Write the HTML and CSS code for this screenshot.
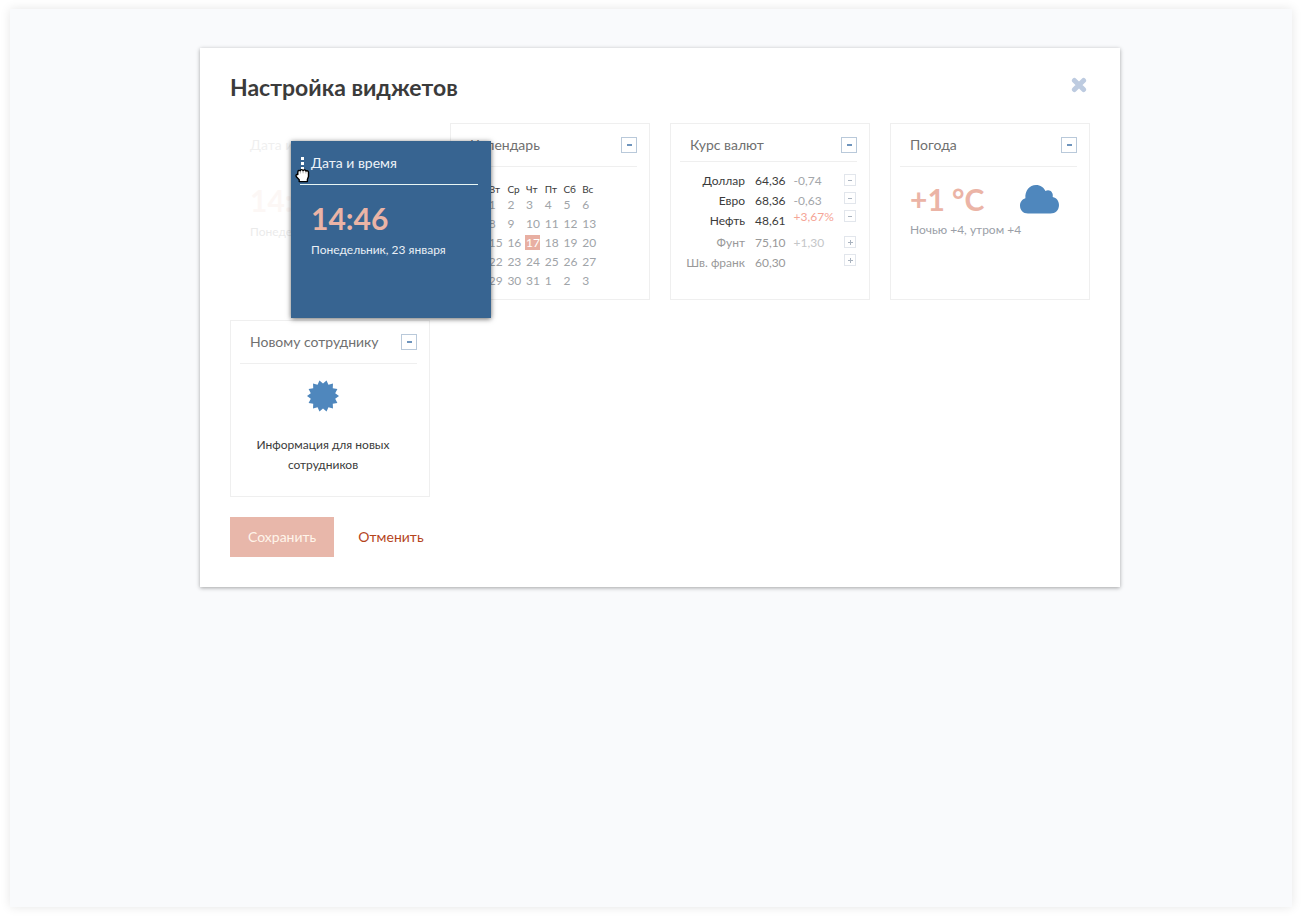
FILE: index.html
```html
<!DOCTYPE html>
<html lang="ru">
<head>
<meta charset="utf-8">
<title>Настройка виджетов</title>
<link rel="stylesheet" href="styles.css">
</head>
<body>
<main class="page">
  <section class="dialog" role="dialog" aria-labelledby="dialog-title">
    <header class="dialog-head">
      <h1 class="dialog-title" id="dialog-title">Настройка виджетов</h1>
      <button class="close" type="button" aria-label="Закрыть">
        <svg width="16" height="16" viewBox="0 0 16 16"><path d="M3.4 3.4l9.2 9.2M12.6 3.4l-9.2 9.2" stroke="currentColor" stroke-width="5" stroke-linecap="round"/></svg>
      </button>
    </header>

    <div class="widgets">
      <div class="slot">
        <article class="card card-ghost" aria-hidden="true">
          <div class="card-head"><h2 class="card-title">Дата и время</h2></div>
          <div class="big">14:46</div>
          <p class="note">Понедельник, 23 января</p>
        </article>
        <article class="card card-drag">
          <svg class="grip" width="4" height="13" viewBox="0 0 4 13"><path d="M0 0h3v3H0zM0 5h3v3H0zM0 10h3v3H0z" fill="#fff"/></svg>
          <svg class="hand" width="16" height="15" viewBox="0 0 16 15"><path d="M4.2 13.6V11.8L1.6 9C.4 7.4 1.2 6 2.8 6.600V4c0-1.700 1.800-2 2.400-1 .3-1.700 2.500-1.800 2.900-.3.600-1.200 2.400-1 2.800.4 1.200-.8 2.600-.1 2.600 1.500v4L12.400 11.500v2.100z" fill="#fff" stroke="#000" stroke-width="1.400" stroke-linejoin="round"/><path d="M5.300 4v1.500M8.100 3.700v1.600M10.900 4v1.500" stroke="#777" stroke-width=".6"/></svg>
          <div class="card-head"><h2 class="card-title">Дата и время</h2></div>
          <div class="big">14:46</div>
          <p class="note">Понедельник, 23 января</p>
        </article>
      </div>

      <article class="card">
        <div class="card-head"><h2 class="card-title">Календарь</h2><button class="toggle" type="button" aria-label="Убрать"></button></div>
        <table class="calendar">
          <thead><tr><th>Пн</th><th>Вт</th><th>Ср</th><th>Чт</th><th>Пт</th><th>Сб</th><th>Вс</th></tr></thead>
          <tbody>
            <tr><td>31</td><td>1</td><td>2</td><td>3</td><td>4</td><td>5</td><td>6</td></tr>
            <tr><td>7</td><td>8</td><td>9</td><td>10</td><td>11</td><td>12</td><td>13</td></tr>
            <tr><td>14</td><td>15</td><td>16</td><td><span class="today">17</span></td><td>18</td><td>19</td><td>20</td></tr>
            <tr><td>21</td><td>22</td><td>23</td><td>24</td><td>25</td><td>26</td><td>27</td></tr>
            <tr><td>28</td><td>29</td><td>30</td><td>31</td><td>1</td><td>2</td><td>3</td></tr>
          </tbody>
        </table>
      </article>

      <article class="card card-compact">
        <div class="card-head"><h2 class="card-title">Курс валют</h2><button class="toggle" type="button" aria-label="Убрать"></button></div>
        <div class="rates">
          <table class="rates-table">
            <tbody>
              <tr><th>Доллар</th><td>64,36</td><td class="delta">-0,74</td></tr>
              <tr><th>Евро</th><td>68,36</td><td class="delta">-0,63</td></tr>
              <tr><th>Нефть</th><td>48,61</td><td class="delta delta-up">+3,67%</td></tr>
            </tbody>
            <tbody class="off">
              <tr><th>Фунт</th><td>75,10</td><td class="delta">+1,30</td></tr>
              <tr><th>Шв. франк</th><td>60,30</td><td class="delta"></td></tr>
            </tbody>
          </table>
          <div class="rate-buttons">
            <button class="mini" type="button" aria-label="Убрать доллар"></button>
            <button class="mini" type="button" aria-label="Убрать евро"></button>
            <button class="mini" type="button" aria-label="Убрать нефть"></button>
            <button class="mini mini-plus mini-first" type="button" aria-label="Добавить фунт"></button>
            <button class="mini mini-plus" type="button" aria-label="Добавить шв. франк"></button>
          </div>
        </div>
      </article>

      <article class="card">
        <div class="card-head"><h2 class="card-title">Погода</h2><button class="toggle" type="button" aria-label="Убрать"></button></div>
        <div class="weather">
          <div class="big">+1 °C</div>
          <svg width="39" height="29" viewBox="0 0 39 29"><path d="M8 28.500C3 28.500 0 25 0 20.500c0-3.600 2.200-6.300 5.400-7.300C4.800 5.500 9.500 0 16 0c4.500 0 7.800 2.400 9.400 6.100 4-2.400 8.300 1 7.300 5.900 3.900.9 6.300 4 6.300 8 0 5-3.500 8.500-8.500 8.500z" fill="#4f87bd"/></svg>
        </div>
        <p class="note note-weather">Ночью +4, утром +4</p>
      </article>

      <article class="card">
        <div class="card-head"><h2 class="card-title">Новому сотруднику</h2><button class="toggle" type="button" aria-label="Убрать"></button></div>
        <div class="newcomer">
          <svg width="32" height="32" viewBox="-16 -16 32 32"><path d="M3.56 -15.6L5.42 -11.26L9.98 -12.51L9.77 -7.79L14.42 -6.94L12.19 -2.78L16 0L12.19 2.78L14.42 6.94L9.77 7.79L9.98 12.51L5.42 11.26L3.56 15.6L0 12.5L-3.56 15.6L-5.42 11.26L-9.98 12.51L-9.77 7.79L-14.42 6.94L-12.19 2.78L-16 0L-12.19 -2.78L-14.42 -6.94L-9.77 -7.79L-9.98 -12.51L-5.42 -11.26L-3.56 -15.6L0 -12.5Z" fill="#4f87bd"/></svg>
          <p class="newcomer-text">Информация для новых сотрудников</p>
        </div>
      </article>
    </div>

    <footer class="actions">
      <button class="save" type="button">Сохранить</button>
      <a class="cancel" href="#">Отменить</a>
    </footer>
  </section>
</main>
</body>
</html>
```
FILE: styles.css
```css
* {
  box-sizing: border-box;
}

body {
  margin: 0;
  padding: 9px 10px 12px;
  min-height: 100vh;
  display: flex;
  background: #fff;
  color: #3b3b3b;
  font-family: Lato, "Open Sans", sans-serif;
}

h1,
h2,
p {
  margin: 0;
}

button {
  font-family: inherit;
  cursor: pointer;
}

.page {
  flex: 1;
  padding: 39px 20px 39px 190px;
  background: #f9fafc;
  box-shadow: 0 0 10px rgba(0, 0, 0, 0.1);
}

.dialog {
  max-width: 920px;
  padding: 23px 30px 30px;
  background: #fff;
  box-shadow: 0 1px 4px rgba(0, 0, 0, 0.35);
}

.dialog-head {
  display: flex;
  justify-content: space-between;
  align-items: flex-start;
  margin-bottom: 20px;
}

.dialog-title {
  font-size: 23px;
  line-height: 32px;
  font-weight: 700;
}

.close {
  display: flex;
  margin: 6px 3px 0 0;
  padding: 0;
  border: 0;
  background: none;
  color: #bdcbe0;
}

.widgets {
  display: grid;
  grid-template-columns: repeat(auto-fill, 200px);
  gap: 20px;
}

.slot {
  position: relative;
}

.card {
  height: 177px;
  border: 1px solid #efefef;
  background: #fff;
}

.card-head {
  display: flex;
  justify-content: space-between;
  align-items: center;
  height: 43px;
  margin: 0 12px 0 9px;
  padding-left: 10px;
  border-bottom: 1px solid #efefef;
}

.card-compact .card-head {
  height: 38px;
}

.card-title {
  color: #707070;
  font-size: 14px;
  line-height: 20px;
  font-weight: 400;
}

.card-compact .card-title,
.card-compact .toggle {
  margin-top: 4px;
}

.toggle {
  display: flex;
  align-items: center;
  justify-content: center;
  width: 16px;
  height: 16px;
  padding: 0;
  border: 1px solid #b9c9da;
  background: #fff;
}

.toggle::before {
  content: "";
  width: 5px;
  height: 2px;
  background: #6f95bd;
}

.big {
  padding: 14px 0 0 19px;
  color: #ebb4a6;
  font-size: 30px;
  line-height: 38px;
  font-weight: 700;
}

.note {
  padding: 3px 0 0 19px;
  font-size: 12px;
  line-height: 20px;
}

.card-ghost {
  border-color: transparent;
  opacity: 0.1;
}

.card-ghost .card-head {
  border-color: transparent;
}

.card-drag {
  position: absolute;
  top: 18px;
  left: 61px;
  width: 200px;
  border-color: #37648f;
  background: #376491;
  color: #e9eff5;
  box-shadow: 0 1px 5px rgba(0, 0, 0, 0.6);
}

.card-drag .card-head {
  margin-left: 8px;
  padding-left: 11px;
  border-color: #e8f6f4;
}

.card-drag .card-title {
  color: #eef3f8;
}

.grip {
  position: absolute;
  top: 15px;
  left: 9px;
}

.hand {
  position: absolute;
  top: 26px;
  left: 3px;
}

.calendar {
  width: 131px;
  margin: 17px 0 0 19px;
  border-collapse: collapse;
  table-layout: fixed;
}

.calendar th,
.calendar td {
  padding: 0;
  text-align: left;
  font-weight: 400;
}

.calendar th {
  font-size: 10px;
  line-height: 11px;
}

.calendar td {
  color: #a0a4a8;
  font-size: 12px;
  line-height: 19px;
}

.today {
  display: block;
  width: 15px;
  margin-left: -1px;
  padding-left: 1px;
  background: #e8afa2;
  color: #fff;
  line-height: 15px;
}

.rates {
  display: flex;
  justify-content: space-between;
  padding: 9px 13px 0 9px;
}

.rates-table {
  border-collapse: collapse;
  font-size: 12px;
  line-height: 20px;
}

.rates-table th,
.rates-table td {
  padding: 0;
  font-weight: 400;
  white-space: nowrap;
}

.rates-table th {
  width: 65px;
  text-align: right;
}

.rates-table td {
  padding-left: 10px;
}

.rates-table .delta {
  padding-left: 8px;
  color: #a3a6aa;
}

.rates-table .delta-up {
  color: #f5a596;
  line-height: 12px;
  vertical-align: top;
}

.off {
  color: #999;
}

.rates-table .off .delta {
  color: #c4c6c8;
}

.off tr:first-child > * {
  padding-top: 2px;
}

.rate-buttons {
  display: flex;
  flex-direction: column;
  gap: 6px;
  padding-top: 3px;
}

.mini {
  position: relative;
  width: 12px;
  height: 12px;
  padding: 0;
  border: 1px solid #e2e6ec;
  background: #fff;
}

.mini::before,
.mini-plus::after {
  content: "";
  position: absolute;
  top: 5px;
  left: 3px;
  width: 4px;
  height: 1px;
  background: #a9b3bf;
}

.mini-plus::before {
  left: 3px;
  width: 5px;
}

.mini-plus::after {
  top: 3px;
  left: 5px;
  width: 1px;
  height: 5px;
}

.mini-first {
  margin-top: 8px;
}

.weather {
  display: flex;
  justify-content: space-between;
  align-items: center;
  padding: 13px 30px 0 0;
}

.weather .big {
  padding-top: 0;
}

.note-weather {
  padding-top: 2px;
  color: #9b9fa8;
}

.newcomer {
  display: flex;
  flex-direction: column;
  align-items: center;
  padding: 16px 27px 0 13px;
}

.newcomer-text {
  margin-top: 23px;
  font-size: 12px;
  line-height: 20px;
  text-align: center;
}

.actions {
  display: flex;
  align-items: center;
  gap: 24px;
  margin-top: 20px;
  font-size: 14px;
}

.save {
  height: 40px;
  padding: 0 18px 1px;
  border: 0;
  background: #e8b7aa;
  color: #fff5ea;
  font-size: 14px;
}

.cancel {
  padding-bottom: 1px;
  color: #b5441c;
  text-decoration: none;
}
```
